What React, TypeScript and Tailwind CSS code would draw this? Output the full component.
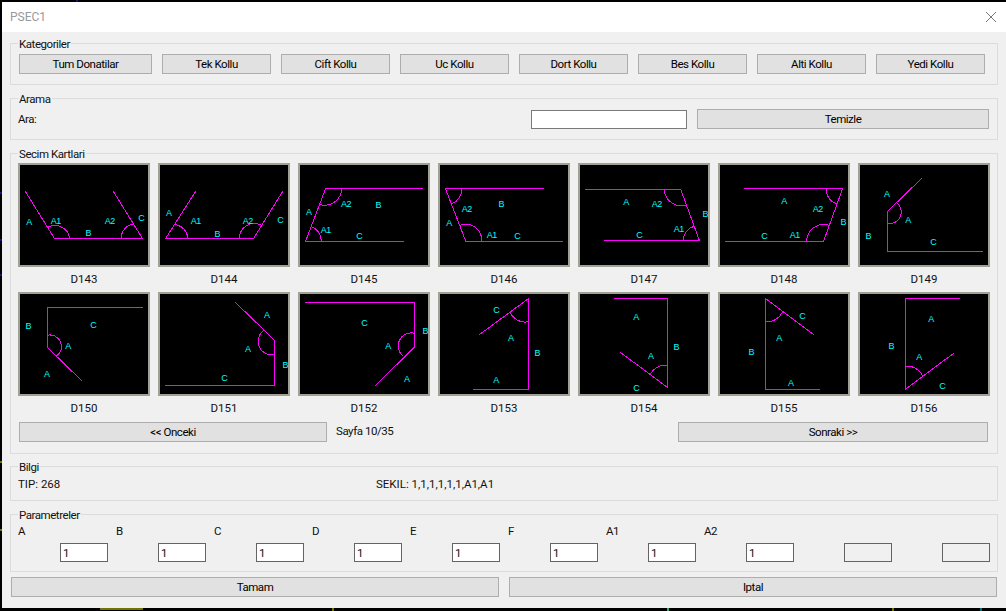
import type { ReactNode } from "react";

type Label = [string, number, number];
type Drawing = {
  name: string;
  line: string;
  arcs: string[];
  labels: Label[];
};

// coordinates are page pixels, the svg viewBox shifts them into the card
const firstRow: Drawing[] = [
  {
    name: "D143",
    line: "25.3,191.3 54.3,238.3 142.3,238.3 113.3,191.3",
    arcs: ["M69.7 238.3A15 15 0 0 0 47.7 227.3", "M121.3 238.3A14 14 0 0 1 134 224"],
    labels: [["A", 29, 222], ["A1", 55.7, 221], ["A2", 109.7, 220.7], ["B", 88.3, 233], ["C", 141.3, 218.3]],
  },
  {
    name: "D144",
    line: "195.7,191.3 165.7,238.3 253.7,238.3 282.7,191.3",
    arcs: ["M187.7 238.3A14 14 0 0 0 174 224.7", "M239.3 238.3A15 15 0 0 1 260.7 225"],
    labels: [["A", 168.7, 213.3], ["A1", 195.7, 221], ["A2", 247.7, 221], ["B", 217.3, 234], ["C", 280.3, 220]],
  },
  {
    name: "D145",
    line: "423,188.3 325.7,188.3 305.7,241 403.7,241",
    arcs: ["M341.7 188.3A17 17 0 0 1 319.3 204.3", "M321.3 241A15 15 0 0 0 311.7 226.7"],
    labels: [["A", 308.7, 212], ["A2", 346, 204], ["B", 378.3, 205], ["A1", 325.7, 230], ["C", 359.3, 236]],
  },
  {
    name: "D146",
    line: "544,188.3 445.3,188.3 465.7,241 563,241",
    arcs: ["M461.7 188.3A16 16 0 0 1 451.7 204", "M481.7 241A16 16 0 0 0 459.7 225.3"],
    labels: [["B", 501.3, 204], ["A2", 466.7, 209], ["A", 449, 223], ["A1", 491.7, 235], ["C", 517.3, 236]],
  },
  {
    name: "D147",
    line: "585,189.3 680.7,189.3 699.3,240.3 604,240.3",
    arcs: ["M664.3 189.3A17 17 0 0 0 686.3 205", "M683.3 240.3A15 15 0 0 1 694 226.3"],
    labels: [["A", 626, 202.3], ["A2", 656.7, 204], ["B", 705.3, 214], ["A1", 678.7, 229], ["C", 639.3, 235]],
  },
  {
    name: "D148",
    line: "744,188.3 842.7,188.3 823.7,241 725,241",
    arcs: ["M826.3 188.3A15 15 0 0 0 837.3 204", "M806.7 241A17 17 0 0 1 829.3 225.3"],
    labels: [["A", 784, 201], ["A2", 817.7, 209], ["B", 843.3, 222], ["C", 764.3, 236], ["A1", 794.7, 235]],
  },
  {
    name: "D149",
    line: "921.7,178.3 887.7,211.3 887.7,251.3 982.7,251.3",
    arcs: ["M896 202.3A11.5 11.5 0 0 1 887.7 223.3"],
    labels: [["A", 886.7, 194], ["A", 908, 220], ["B", 868.3, 236], ["C", 933.3, 242]],
  },
];

const secondRow: Drawing[] = [
  {
    name: "D150",
    line: "143,307.3 47.3,307.3 47.3,347.3 81.7,380.7",
    arcs: ["M47.3 335.3A11.5 11.5 0 0 1 56 356.3"],
    labels: [["B", 28.3, 326], ["C", 93.3, 325], ["A", 68, 346], ["A", 46.7, 374]],
  },
  {
    name: "D151",
    line: "235.3,302.3 274.3,340 274.3,385.3 165.3,385.3",
    arcs: ["M264 330.3A13.5 13.5 0 0 0 274.3 354.7"],
    labels: [["A", 266.7, 315.3], ["A", 247.7, 349.3], ["B", 285.3, 365], ["C", 224.3, 378.3]],
  },
  {
    name: "D152",
    line: "305,302.3 414.3,302.3 414.3,347.3 375.3,385.7",
    arcs: ["M414.3 333.3A13 13 0 0 0 403.3 356.3"],
    labels: [["C", 364.3, 323.3], ["B", 425.3, 331.3], ["A", 388, 346], ["A", 406.7, 379.3]],
  },
  {
    name: "D153",
    line: "479.3,334.7 528.3,298.7 528.3,389.3 473,389.3",
    arcs: ["M510 311.7A16 16 0 0 0 528.3 321.7"],
    labels: [["C", 496.3, 310], ["A", 510.7, 338], ["B", 537.3, 353], ["A", 496, 380.3]],
  },
  {
    name: "D154",
    line: "614,298.3 667.3,298.3 667.3,387.3 620.3,352.3",
    arcs: ["M667.3 365.3A17 17 0 0 0 650.3 374.3"],
    labels: [["A", 636, 317], ["B", 676.3, 347], ["A", 650.7, 356], ["C", 636.3, 388.3]],
  },
  {
    name: "D155",
    line: "813.7,334.7 765.7,298.7 765.7,389.3 819.7,389.3",
    arcs: ["M782.7 311.7A17 17 0 0 1 765.7 321.7"],
    labels: [["C", 802.3, 316], ["A", 779, 338], ["B", 751.3, 352], ["A", 790.7, 383.3]],
  },
  {
    name: "D156",
    line: "959.7,298.3 905.3,298.3 905.3,389.3 953.7,353.3",
    arcs: ["M905.3 366.3A17 17 0 0 1 922.7 375.7"],
    labels: [["A", 931, 319], ["B", 891.3, 346], ["A", 919, 357], ["C", 942.3, 386]],
  },
];

const categories = ["Tek Kollu", "Cift Kollu", "Uc Kollu", "Dort Kollu", "Bes Kollu", "Alti Kollu", "Yedi Kollu"];
const paramNames = ["A", "B", "C", "D", "E", "F", "A1", "A2"];

function Group({ title, className, children }: { title: string; className: string; children: ReactNode }) {
  return (
    <div className={`relative border border-[#dcdcdc] ${className}`}>
      <span className="absolute left-[7px] top-[-6px] bg-[#f0f0f0] px-px leading-[12px]">{title}</span>
      {children}
    </div>
  );
}

function Btn({ className, children }: { className: string; children: ReactNode }) {
  return (
    <button className={`flex items-center justify-center border border-[#adadad] bg-[#e1e1e1] pt-px text-black ${className}`}>
      {children}
    </button>
  );
}

function Card({ item, x, y }: { item: Drawing; x: number; y: number }) {
  return (
    <div className="flex h-[129px] w-[132px] flex-col">
      <div className="h-[104px] w-[132px] border-2 border-[#a0a094] bg-black">
        <svg width="128" height="100" viewBox={`${x + 2} ${y + 2} 128 100`} className="block">
          <polyline points={item.line} fill="none" stroke="#ff00ff" strokeWidth="1" shapeRendering="crispEdges" />
          {item.arcs.map((d) => (
            <path key={d} d={d} fill="none" stroke="#ff00ff" strokeWidth="1" shapeRendering="crispEdges" />
          ))}
          {item.labels.map(([text, lx, ly], i) => (
            <text
              key={i}
              x={lx}
              y={ly}
              fill="#00ffff"
              fontSize="9"
              textAnchor="middle"
              dominantBaseline="central"
              style={{ fontFamily: "'Liberation Sans', sans-serif" }}
            >
              {text}
            </text>
          ))}
        </svg>
      </div>
      <div className="flex h-[25px] items-center justify-center tracking-normal">{item.name}</div>
    </div>
  );
}

export default function App() {
  return (
    <div className="relative h-[611px] w-[1006px] overflow-hidden bg-black pl-[2px] pt-[2px] font-['Roboto',sans-serif] text-[11.5px] tracking-[-0.45px] text-[#111]">
      {/* bits of the CAD drawing showing round the dialog */}
      <svg width="1006" height="611" className="absolute left-0 top-0">
        <path d="M100 609H143M333 608V611M668 608V611M893 608V611" stroke="#e6e600" fill="none" />
        <path d="M668 608V611M981 608V611" stroke="#00e0e0" fill="none" />
        <path d="M0 193H2M0 240H2M0 275H2M77 0V2" stroke="#2030ff" fill="none" />
        <path d="M0 462H2M0 530H2" stroke="#e6e600" fill="none" />
      </svg>
      <div className="relative flex h-[606px] w-[1004px] flex-col bg-[#f0f0f0]">
        <div className="flex h-[30px] shrink-0 items-center justify-between bg-white pl-2 pr-[10px] text-[12px] tracking-normal text-[#999]">
          <span>PSEC1</span>
          <svg width="10" height="10" viewBox="0 0 10 10">
            <path d="M0 0L10 10M10 0L0 10" stroke="#555" strokeWidth="0.8" fill="none" />
          </svg>
        </div>

        <div className="flex flex-col px-2 pt-[11px]">
          <Group title="Kategoriler" className="h-[42px]">
            <div className="flex gap-[10px] pl-2 pt-[10px]">
              <Btn className="h-5 w-[133px]">Tum Donatilar</Btn>
              {categories.map((c) => (
                <Btn key={c} className="h-5 w-[109px]">
                  {c}
                </Btn>
              ))}
            </div>
          </Group>

          <Group title="Arama" className="mt-[13px] h-[42px]">
            <div className="flex items-center pl-[7px] pr-2 pt-[10px]">
              <span className="pt-px">Ara:</span>
              <input readOnly className="ml-auto h-[19px] w-[156px] border border-[#7a7a7a] bg-white" />
              <Btn className="ml-[10px] h-5 w-[292px]">Temizle</Btn>
            </div>
          </Group>

          <Group title="Secim Kartlari" className="mt-[13px] h-[301px]">
            <div className="pl-[7px] pt-[9px]">
              <div className="flex gap-2">
                {firstRow.map((item, i) => (
                  <Card key={item.name} item={item} x={18 + i * 140} y={163} />
                ))}
              </div>
              <div className="flex gap-2">
                {secondRow.map((item, i) => (
                  <Card key={item.name} item={item} x={18 + i * 140} y={292} />
                ))}
              </div>
              <div className="mt-px flex items-center pl-px pr-[9px]">
                <Btn className="h-5 w-[308px]">&lt;&lt; Onceki</Btn>
                <span className="ml-[9px]">Sayfa 10/35</span>
                <Btn className="ml-auto h-5 w-[310px]">Sonraki &gt;&gt;</Btn>
              </div>
            </div>
          </Group>

          <Group title="Bilgi" className="mt-3 h-[35px]">
            <div className="flex pl-[7px] pt-[9px] leading-4 tracking-normal">
              <span className="w-[358px]">TIP: 268</span>
              <span>SEKIL: 1,1,1,1,1,1,A1,A1</span>
            </div>
          </Group>

          <Group title="Parametreler" className="mt-[13px] h-[58px]">
            <div className="pl-[7px] pt-2">
              <div className="flex leading-4">
                {paramNames.map((p) => (
                  <span key={p} className="w-[98px]">
                    {p}
                  </span>
                ))}
              </div>
              <div className="ml-[42px] mt-1 flex gap-[50px]">
                {paramNames.map((p) => (
                  <input key={p} readOnly defaultValue="1" className="h-[19px] w-12 border border-[#646464] bg-white px-[2px]" />
                ))}
                <div className="h-[19px] w-12 border border-[#646464]" />
                <div className="h-[19px] w-12 border border-[#646464]" />
              </div>
            </div>
          </Group>

          <div className="mt-[5px] grid grid-cols-2 gap-[10px] px-px">
            <Btn className="h-5">Tamam</Btn>
            <Btn className="h-5">Iptal</Btn>
          </div>
        </div>
      </div>
    </div>
  );
}
